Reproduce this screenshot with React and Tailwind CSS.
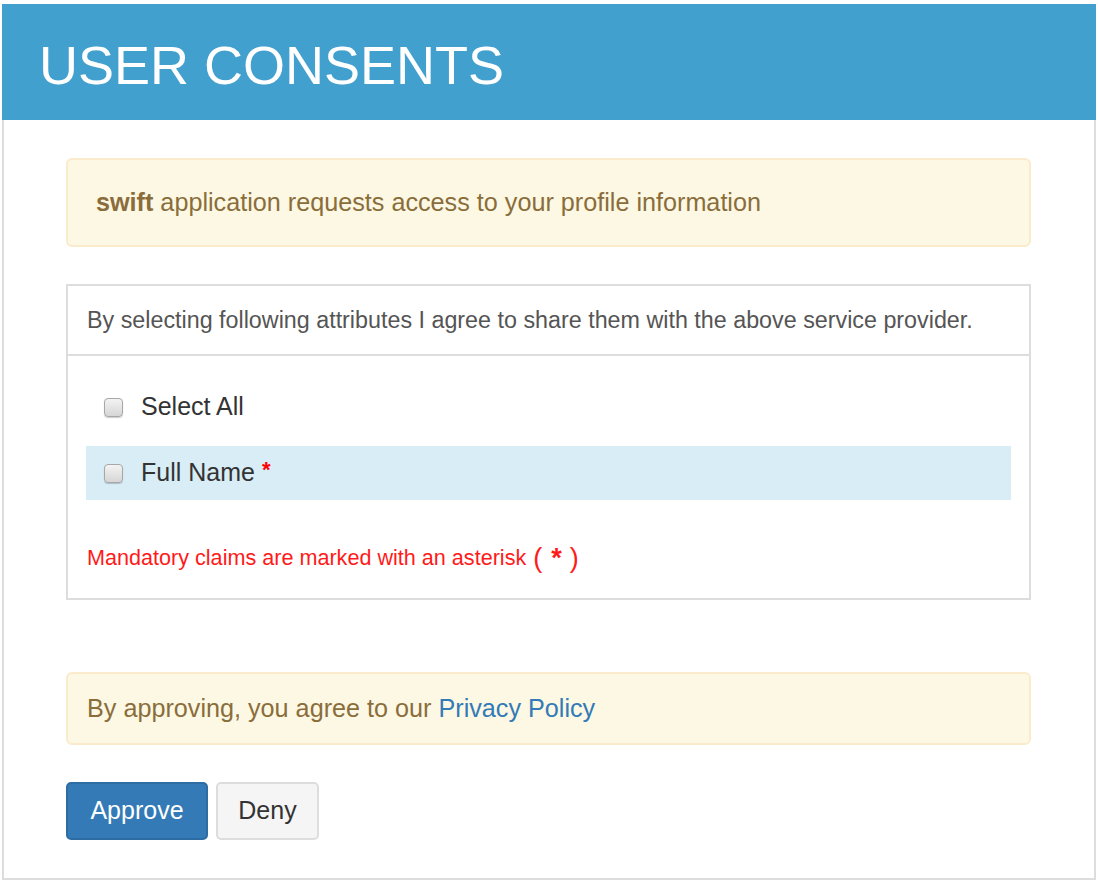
import React from "react";

function Checkbox() {
  return (
    <span className="inline-block w-[19px] h-[19px] shrink-0 rounded-[4px] border border-[#a7a7a7] bg-gradient-to-b from-[#f3f3f3] to-[#d6d6d6] shadow-[0_1px_1px_rgba(0,0,0,0.2)]" />
  );
}

export default function App() {
  return (
    <div className="w-[1098px] h-[882px] bg-white pt-[4px] px-[2px] font-['Liberation_Sans',Arial,sans-serif]">
      <div className="h-[116px] bg-[#42a0ce] flex items-center pl-[37px] pt-[6px]">
        <h1 className="text-white text-[54px] leading-none">USER CONSENTS</h1>
      </div>
      <div className="h-[760px] border-2 border-t-0 border-[#dddddd] pl-[62px] pr-[63px] pt-[38px]">
        <div className="h-[89px] border-2 border-[#faebcc] bg-[#fcf8e3] rounded-[6px] flex items-center pl-[28px] text-[25.2px] text-[#8a6d3b]">
          <span>
            <b>swift</b> application requests access to your profile information
          </span>
        </div>

        <div className="mt-[37px] h-[316px] border-2 border-[#dddddd] flex flex-col">
          <div className="h-[70px] border-b-2 border-[#dddddd] flex items-center pl-[19px] text-[23.3px] text-[#555555]">
            By selecting following attributes I agree to share them with the above service provider.
          </div>
          <div className="px-[18px] pt-[24px]">
            <div className="h-[54px] flex items-center pl-[18px] gap-[18px] text-[25px] text-[#333333]">
              <Checkbox />
              <span>Select All</span>
            </div>
            <div className="mt-[12px] h-[54px] flex items-center pl-[18px] gap-[18px] text-[25px] text-[#333333] bg-[#d9edf7]">
              <Checkbox />
              <span>
                Full Name <span className="text-[#ff0000] text-[22px] font-bold align-top relative top-[-1px]">*</span>
              </span>
            </div>
            <div className="mt-[43px] h-[30px] flex items-center pl-[1px] text-[21.6px] text-[#ff1a1a]">
              <span>Mandatory claims are marked with an asterisk</span>
              <span className="text-[27px] ml-[7px] flex items-center">
                <span>(</span>
                <span className="ml-[9px] font-bold">*</span>
                <span className="ml-[8px]">)</span>
              </span>
            </div>
          </div>
        </div>

        <div className="mt-[72px] h-[73px] border-2 border-[#faebcc] bg-[#fcf8e3] rounded-[6px] flex items-center pl-[19px] text-[25.2px] text-[#8a6d3b]">
          <span>
            By approving, you agree to our <a className="text-[#337ab7]">Privacy Policy</a>
          </span>
        </div>

        <div className="mt-[37px] flex gap-[8px]">
          <button className="w-[142px] h-[58px] rounded-[5px] bg-[#337ab7] border-2 border-[#2e6da4] text-white text-[25px] flex items-center justify-center">
            Approve
          </button>
          <button className="w-[103px] h-[58px] rounded-[5px] bg-[#f5f5f5] border-2 border-[#dddddd] text-[#333333] text-[25px] flex items-center justify-center">
            Deny
          </button>
        </div>
      </div>
    </div>
  );
}
